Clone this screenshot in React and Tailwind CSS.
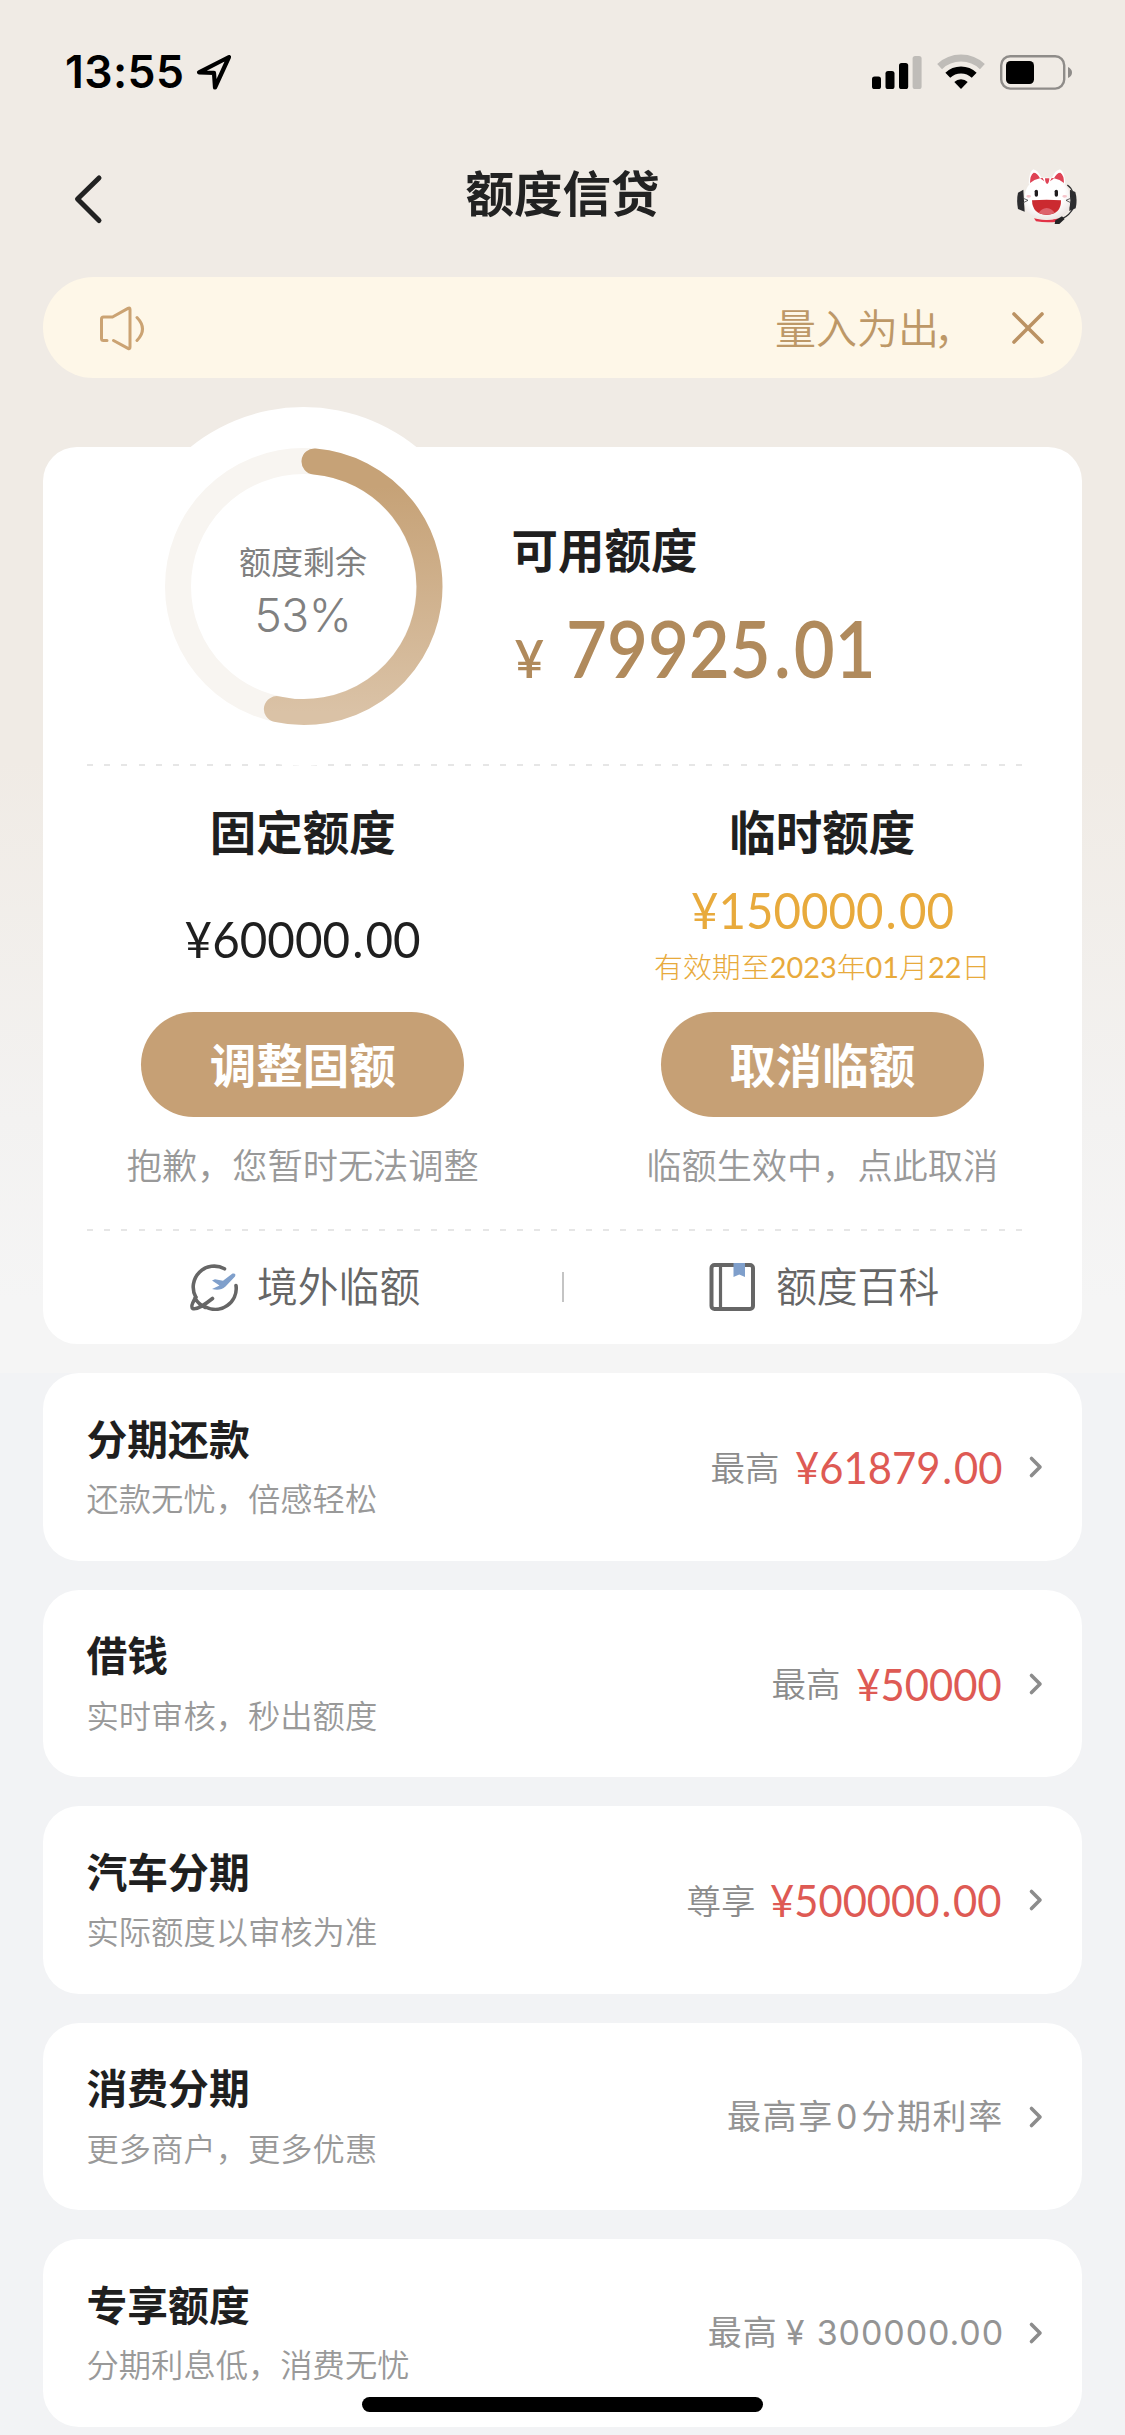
const CJK = 'font-["Noto_Sans_CJK_SC",sans-serif]';
const NUM = 'font-["Lato","Noto_Sans_CJK_SC",sans-serif]';

function StatusBar() {
  return (
    <div className="flex h-[144px] items-start justify-between pl-[65px] pr-[53px] pt-[53px]">
      <div className="flex h-[38px] items-center">
        <span className='w-[131px] font-["Inter",sans-serif] text-[44.5px] leading-[38px] font-semibold tracking-[0.4px] text-black'>
          13:55
        </span>
        <svg width="36" height="36" viewBox="0 0 36 36" fill="none" stroke="#000" strokeWidth="4.2" strokeLinejoin="round" strokeLinecap="round">
          <path d="M33 3 L3 18.3 L18 18.8 L19 33.5 Z" />
        </svg>
      </div>
      <div className="flex h-[38px] items-center">
        <svg width="50" height="34" viewBox="0 0 50 34">
          <rect x="0" y="21.5" width="9" height="12.5" rx="2.6" />
          <rect x="13.5" y="16" width="9" height="18" rx="2.6" />
          <rect x="27" y="8" width="9.2" height="26" rx="2.6" />
          <rect x="40.6" y="1" width="9" height="33" rx="2.6" fill="#bfbcb8" />
        </svg>
        <svg className="ml-[15px]" width="48" height="36" viewBox="0 0 48 36" fill="none">
          <path d="M2.6 12.6 A31 31 0 0 1 45.4 12.6" stroke="#bfbcb8" strokeWidth="7" />
          <path d="M10.8 21.3 A19 19 0 0 1 37.2 21.3" stroke="#000" strokeWidth="7" />
          <path d="M24 35 L17.3 28 A9.6 9.6 0 0 1 30.7 28 Z" fill="#000" />
        </svg>
        <svg className="ml-[15px]" width="72" height="35" viewBox="0 0 72 35">
          <rect x="1.2" y="1.2" width="63" height="32.4" rx="9" fill="none" stroke="#8f8c89" strokeWidth="2.4" />
          <rect x="6" y="6" width="28" height="23" rx="4.5" />
          <path d="M68 12 Q72 14 72 17.5 Q72 21 68 23 Z" fill="#8f8c89" />
        </svg>
      </div>
    </div>
  );
}

function CatAgent() {
  return (
    <svg width="65" height="60" viewBox="105 50 195 180">
      <defs>
        <radialGradient id="face" cx="0.45" cy="0.35" r="0.7">
          <stop offset="0.6" stopColor="#ffffff" />
          <stop offset="1" stopColor="#e9e1df" />
        </radialGradient>
      </defs>
      <path d="M130 118 L114 127 Q109 150 114 176 L134 184 Z" fill="#2c2c2f" />
      <path d="M270 118 L286 125 Q293 150 287 174 L268 182 Z" fill="#2c2c2f" />
      <path d="M262 104 Q274 112 278 126" fill="none" stroke="#333" strokeWidth="4" />
      <path d="M162 204 Q200 214 236 204 L232 214 Q200 218 168 213 Z" fill="#e23347" />
      <path d="M146 100 Q148 62 160 57 Q174 60 184 82 L216 82 Q226 60 240 57 Q254 64 256 100 Z" fill="#fff" />
      <path d="M133 150 Q133 84 200 82 Q270 84 271 150 Q270 208 201 208 Q134 208 133 150 Z" fill="url(#face)" />
      <path d="M150 98 Q150 74 161 67 Q172 67 180 84 Q162 88 150 98 Z" fill="#df4355" />
      <path d="M252 98 Q252 74 241 67 Q230 67 222 84 Q240 88 252 98 Z" fill="#df4355" />
      <path d="M195 84 L208 84 Q208 98 201.500 101 Q195 98 195 84 Z M180 84 L188 83 L193 93 Z M223 84 L215 83 L210 93 Z" fill="#df4355" />
      <rect x="164" y="118" width="10" height="21" rx="5" fill="#1f1c1e" />
      <rect x="224" y="118" width="10" height="21" rx="5" fill="#1f1c1e" />
      <ellipse cx="146" cy="138" rx="7" ry="4" fill="#f6c5cb" />
      <ellipse cx="254" cy="138" rx="7" ry="4" fill="#f6c5cb" />
      <path d="M156 150 Q200 146 243 150 Q244 192 200 194 Q157 192 156 150 Z" fill="#cb2a30" />
      <path d="M176 188 Q184 174 200 173 Q216 174 224 188 Q200 198 176 188 Z" fill="#dd626c" />
      <path d="M128 143 L144 150 L128 158 M274 143 L258 150 L274 158" fill="none" stroke="#444" strokeWidth="2.500" />
      <path d="M282 170 Q268 196 248 204" fill="none" stroke="#2c2c2f" strokeWidth="4" />
      <path d="M226 210 L246 198 L254 206 L238 221 L224 221 Z" fill="#242426" />
    </svg>
  );
}

function NavBar() {
  return (
    <header className="flex h-[133px] items-start justify-between pl-[72px] pr-[45px]">
      <svg className="mt-[28px]" width="38" height="54" viewBox="0 0 38 54" fill="none" stroke="#222" strokeWidth="5" strokeLinecap="round" strokeLinejoin="round">
        <path d="M27 6 L5.500 27 L27 48.500" />
      </svg>
      <h1 className={`${CJK} mt-[19px] text-[48.5px] leading-[56px] font-bold text-[#222]`}>额度信贷</h1>
      <div className="mt-[23px]">
        <CatAgent />
      </div>
    </header>
  );
}

function Notice() {
  return (
    <div className="mx-[43px] flex h-[101px] items-center rounded-full bg-[#fef7e8] pl-[55px] pr-[36px]">
      <svg width="48" height="46" viewBox="0 0 48 46" fill="none" stroke="#cba373" strokeWidth="3" strokeLinecap="round" strokeLinejoin="round">
        <path d="M9 35.500 H5.500 Q3.500 35.500 3.500 33.500 V14 Q3.500 12 5.500 12 H14.500 L30 3.400 Q32 2.400 32 4.500 V42 Q32 44.500 30 43.400 L15.500 35.500" />
        <path d="M39 12.500 Q50 24 39 35.500" />
      </svg>
      <span className={`${CJK} ml-auto h-[62px] w-[206px] text-[41px] leading-[58px] font-[350] whitespace-nowrap text-[#bd9867]`}>
        量入为<span className="tracking-[-5px]">出</span>，
      </span>
      <svg className="ml-[29px]" width="36" height="36" viewBox="0 0 36 36" fill="none" stroke="#bb9263" strokeWidth="3.6" strokeLinecap="round">
        <path d="M4 4 L32 32 M32 4 L4 32" />
      </svg>
    </div>
  );
}

function QuotaRing() {
  return (
    <div className="relative -mt-[40px] ml-[80.500px] h-[359px] w-[359px] shrink-0">
      <svg width="359" height="359" viewBox="-179.500 -179.500 359 359" fill="none">
        <defs>
          <linearGradient id="ring" gradientUnits="userSpaceOnUse" x1="0" y1="-125" x2="0" y2="125">
            <stop offset="0.100" stopColor="#c6a277" />
            <stop offset="1" stopColor="#dac2a6" />
          </linearGradient>
        </defs>
        <circle r="179.500" fill="#fff" />
        <circle r="125.500" stroke="#f8f5f1" strokeWidth="26" />
        <path d="M11 -125 A125.500 125.500 0 1 1 -26.600 122.600" stroke="url(#ring)" strokeWidth="26" strokeLinecap="round" />
      </svg>
      <div className="absolute inset-0 flex flex-col items-center pt-[130.500px] text-[#808080]">
        <span className={`${CJK} text-[32px] leading-[44px]`}>额度剩余</span>
        <span className='mt-[8px] font-["Inter",sans-serif] text-[46px] leading-[50px] font-[350] tracking-[-0.4px]'>53%</span>
      </div>
    </div>
  );
}

function DashedLine() {
  return (
    <div className="mr-[54px] ml-[43.500px] h-[2px] bg-[repeating-linear-gradient(90deg,#e6e6e6_0px,#e6e6e6_6px,transparent_6px,transparent_17.2px)]" />
  );
}

/* Narrowed numerals with a wide decimal point. */
function Amount({ value, className }) {
  const [whole, cents] = value.split(".");
  return (
    <span className={`${NUM} inline-block whitespace-nowrap ${className}`}>
      {whole}
      {cents && <span className="mx-[0.045em]">.</span>}
      {cents}
    </span>
  );
}

function QuotaColumn({ title, action, hint, children }) {
  return (
    <div className="flex w-1/2 flex-col items-center">
      <h2 className={`${CJK} mt-[36px] text-[46.5px] leading-[56px] font-bold text-[#1f1f1f]`}>{title}</h2>
      <div className="flex h-[154px] flex-col items-center">{children}</div>
      <button className={`${CJK} flex h-[104.5px] w-[323px] items-center justify-center rounded-full bg-[#c6a075] pb-[2px] text-[46.5px] leading-[56px] font-bold text-white`}>
        {action}
      </button>
      <p className={`${CJK} mt-[23.500px] text-[35.2px] leading-[48px] font-[350] text-[#999]`}>{hint}</p>
    </div>
  );
}

function PlaneIcon() {
  return (
    <svg width="48" height="48" viewBox="0 0 48 48" fill="none" strokeLinecap="round" strokeLinejoin="round">
      <path d="M34.500 5.800 A21 21 0 0 0 5.800 34.200 M46 22.500 A21 21 0 0 1 15.500 44" stroke="#666" strokeWidth="3.600" />
      <path d="M5.800 34.200 Q0 43.500 2.800 45.500 Q7.500 47.500 22.500 35.500 M5 35 Q8 41 15.500 44.500" stroke="#666" strokeWidth="3.600" />
      <path d="M22 17.500 L25 16.200 L33 17.800 L42.500 10.500 Q46.500 9.800 45 13.500 L35.500 23.500 Q30 28.500 22 26 L29.500 22.500 Z" fill="#7f9fcb" />
    </svg>
  );
}

function BookIcon() {
  return (
    <svg width="47" height="50" viewBox="0 0 47 50" fill="none">
      <rect x="2.500" y="3" width="41.500" height="44" rx="3" stroke="#666" strokeWidth="4" />
      <path d="M11.500 3 V47" stroke="#666" strokeWidth="3.200" />
      <path d="M24.500 1 H36 V15 L30.250 12.500 L24.500 15 Z" fill="#7f9fcb" />
    </svg>
  );
}

function QuotaCard() {
  return (
    <section className="mx-[43px] mt-[69px] h-[897px] rounded-[34px] bg-white">
      <div className="flex h-[317px] items-start">
        <QuotaRing />
        <div className="ml-[29px] pt-[73px]">
          <h2 className={`${CJK} text-[46.5px] leading-[56px] font-bold text-[#1f1f1f]`}>可用额度</h2>
          <div className="mt-[32px] flex items-baseline leading-[80px] text-[#b08a5c]">
            <span className={`${NUM} w-[54px] pl-[3px] text-[51px] font-semibold`}>¥</span>
            <Amount value="79925.01" className="origin-left scale-x-[0.905] text-[78px] font-semibold" />
          </div>
        </div>
      </div>
      <DashedLine />
      <div className="flex h-[463px]">
        <QuotaColumn title="固定额度" action="调整固额" hint="抱歉，您暂时无法调整">
          <Amount value="¥60000.00" className="mt-[53px] scale-x-[0.932] text-[51px] leading-[56px] text-[#1f1f1f]" />
        </QuotaColumn>
        <QuotaColumn title="临时额度" action="取消临额" hint="临额生效中，点此取消">
          <Amount value="¥150000.00" className="mt-[24px] scale-x-[0.930] text-[51px] leading-[56px] text-[#e8aa3c]" />
          <span className={`${NUM} mt-[9px] text-[28.900px] leading-[40px] font-light text-[#e8aa3c]`}>
            有效期至<b className="font-normal">2023</b>年<b className="font-normal">01</b>月<b className="font-normal">22</b>日
          </span>
        </QuotaColumn>
      </div>
      <DashedLine />
      <div className="flex h-[111px] items-center">
        <div className="flex w-[519px] items-center pl-[146.500px]">
          <PlaneIcon />
          <span className={`${CJK} ml-[19.500px] pb-[4px] text-[40.800px] leading-[56px] font-[350] text-[#666]`}>境外临额</span>
        </div>
        <div className="h-[30px] w-[2px] bg-[#c4c4c4]" />
        <div className="flex items-center pl-[145px]">
          <BookIcon />
          <span className={`${CJK} ml-[20px] pb-[4px] text-[40.800px] leading-[56px] font-[350] text-[#666]`}>额度百科</span>
        </div>
      </div>
    </section>
  );
}

function ProductRow({ title, desc, label, amount, amountClass, note }) {
  return (
    <li className="flex h-[187.5px] justify-between rounded-[36px] bg-white pl-[43.5px] pr-[38px]">
      <div className="pt-[40.5px]">
        <h3 className={`${CJK} text-[40.800px] leading-[48px] font-bold text-[#1f1f1f]`}>{title}</h3>
        <p className={`${CJK} mt-[15.500px] text-[32.300px] leading-[40px] font-[350] text-[#999]`}>{desc}</p>
      </div>
      <div className="flex items-center pt-[1px]">
        {label && <span className={`${CJK} pb-[3px] text-[34.500px] leading-[48px] font-[350] text-[#8c8c8c]`}>{label}</span>}
        {amount && (
          <Amount value={amount} className={`origin-right scale-x-[0.928] text-[45px] leading-[56px] text-[#de5a54] ${amountClass}`} />
        )}
        {note}
        <svg className="ml-[26px]" width="16" height="26" viewBox="0 0 16 26" fill="none" stroke="#8c8c8c" strokeWidth="3.600" strokeLinecap="round" strokeLinejoin="round">
          <path d="M3.500 4.500 L12 13 L3.500 21.500" />
        </svg>
      </div>
    </li>
  );
}

const noteClass =
  'font-["Inter","Noto_Sans_CJK_SC",sans-serif] text-[34px] leading-[48px] font-[370] text-[#949494] whitespace-pre';

const products = [
  { title: "分期还款", desc: "还款无忧，倍感轻松", label: "最高", amount: "¥61879.00", amountClass: "-ml-px" },
  { title: "借钱", desc: "实时审核，秒出额度", label: "最高", amount: "¥50000", amountClass: "ml-[5px]" },
  { title: "汽车分期", desc: "实际额度以审核为准", label: "尊享", amount: "¥500000.00", amountClass: "-ml-[3px]" },
  {
    title: "消费分期",
    desc: "更多商户，更多优惠",
    note: (
      <span className={`${noteClass} -mr-[2px] tracking-[1.700px]`}>
        最高享<span className="mx-[2px]">0</span>分期利率
      </span>
    ),
  },
  {
    title: "专享额度",
    desc: "分期利息低，消费无忧",
    note: (
      <span className={`${noteClass} -mr-[2px] tracking-[0.900px]`}>
        最高<span className="mr-[1px] ml-[8px]">¥</span> 300000.00
      </span>
    ),
  },
];

export default function App() {
  return (
    <div className="relative h-[2435px] w-[1125px] overflow-hidden bg-[#f2f3f5]">
      <div className="h-[1373px] bg-[linear-gradient(180deg,#f0ebe5_0px,#f0ebe5_760px,#f3f2f1_1120px,#f5f5f5_1300px)]">
        <StatusBar />
        <NavBar />
        <Notice />
        <QuotaCard />
      </div>
      <ul className="mx-[43px] flex flex-col gap-[29px]">
        {products.map((p) => (
          <ProductRow key={p.title} {...p} />
        ))}
      </ul>
      <div className="absolute top-[2397px] left-[362px] h-[15px] w-[401px] rounded-full bg-black" />
    </div>
  );
}
